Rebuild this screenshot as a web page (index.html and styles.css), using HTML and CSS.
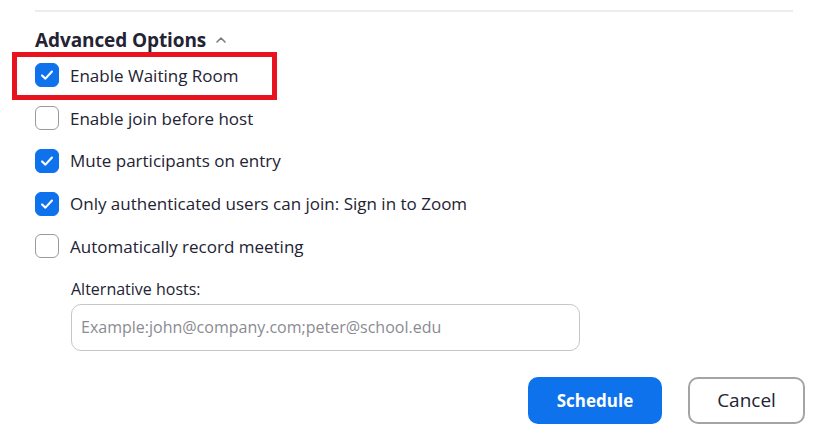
FILE: index.html
```html
<!DOCTYPE html>
<html>
<head>
<meta charset="utf-8">
<link rel="stylesheet" href="styles.css">
</head>
<body>
<div class="page">
  <div class="separator"></div>
  <div class="section-title">
    <span>Advanced Options</span>
    <svg class="caret" width="12" height="8" viewBox="0 0 12 8"><path d="M2 6 L6 2 L10 6" fill="none" stroke="#7a7a85" stroke-width="1.6" stroke-linecap="round" stroke-linejoin="round"/></svg>
  </div>
  <div class="options">
    <label class="option highlighted">
      <span class="box checked"><svg width="18" height="18" viewBox="0 0 16 16"><path d="M3.6 8.4 L6.6 11.2 L12.4 4.9" fill="none" stroke="#fff" stroke-width="1.9" stroke-linecap="round" stroke-linejoin="round"/></svg></span>
      <span class="text">Enable Waiting Room</span>
      <span class="annotation"></span>
    </label>
    <label class="option">
      <span class="box"></span>
      <span class="text">Enable join before host</span>
    </label>
    <label class="option">
      <span class="box checked"><svg width="18" height="18" viewBox="0 0 16 16"><path d="M3.6 8.4 L6.6 11.2 L12.4 4.9" fill="none" stroke="#fff" stroke-width="1.9" stroke-linecap="round" stroke-linejoin="round"/></svg></span>
      <span class="text">Mute participants on entry</span>
    </label>
    <label class="option">
      <span class="box checked"><svg width="18" height="18" viewBox="0 0 16 16"><path d="M3.6 8.4 L6.6 11.2 L12.4 4.9" fill="none" stroke="#fff" stroke-width="1.9" stroke-linecap="round" stroke-linejoin="round"/></svg></span>
      <span class="text">Only authenticated users can join: Sign in to Zoom</span>
    </label>
    <label class="option">
      <span class="box"></span>
      <span class="text">Automatically record meeting</span>
    </label>
  </div>
  <div class="alt-hosts">
    <div class="alt-label">Alternative hosts:</div>
    <div class="input">Example:john@company.com;peter@school.edu</div>
  </div>
  <div class="actions">
    <button class="btn primary">Schedule</button>
    <button class="btn secondary">Cancel</button>
  </div>
</div>
</body>
</html>
```
FILE: styles.css
```css
* { box-sizing: border-box; }
html, body { margin: 0; padding: 0; background: #fff; }
body {
  font-family: "Open Sans", "Noto Sans", sans-serif;
  color: #232333;
  width: 825px;
  height: 442px;
  overflow: hidden;
}
.page {
  padding: 10px 32px 0 35px;
}
.separator {
  height: 2px;
  background: #ececec;
}
.section-title {
  display: flex;
  align-items: center;
  gap: 9px;
  height: 30px;
  margin-top: 13px;
  font-size: 19px;
  font-weight: 700;
  color: #232333;
  letter-spacing: -0.1px;
}
.options {
  display: flex;
  flex-direction: column;
  margin-top: -1px;
}
.option {
  position: relative;
  display: flex;
  align-items: center;
  gap: 11px;
  height: 42.75px;
  font-size: 17px;
}
.box {
  width: 24px;
  height: 24px;
  border-radius: 6px;
  border: 1.5px solid #9a9a9f;
  display: flex;
  align-items: center;
  justify-content: center;
  flex: none;
}
.box.checked {
  background: #0e72ed;
  border-color: #0e72ed;
}
.text { white-space: nowrap; }
.annotation {
  position: absolute;
  left: -23px;
  top: -2px;
  width: 265px;
  height: 48px;
  border: 5px solid #e8131f;
}
.alt-hosts {
  padding-left: 36px;
  margin-top: 9px;
}
.alt-label {
  font-size: 16px;
  height: 24px;
  line-height: 24px;
  color: #232333;
}
.input {
  margin-top: 3px;
  width: 509px;
  height: 47px;
  border: 1.5px solid #c6c6c9;
  border-radius: 10px;
  padding-left: 9px;
  display: flex;
  align-items: center;
  font-size: 16px;
  color: #8b8b92;
}
.actions {
  display: flex;
  justify-content: flex-end;
  gap: 26px;
  margin-top: 26px;
  margin-right: -12px;
}
.btn {
  font-family: "Open Sans", "Noto Sans", sans-serif;
  height: 47px;
  border-radius: 10px;
  cursor: pointer;
}
.btn.primary {
  width: 134px;
  background: #0e72ed;
  border: none;
  color: #fff;
  font-weight: 700;
  font-size: 17px;
}
.btn.secondary {
  width: 117px;
  background: #fff;
  border: 2px solid #a3a3a8;
  color: #232333;
  font-size: 19px;
}
```
